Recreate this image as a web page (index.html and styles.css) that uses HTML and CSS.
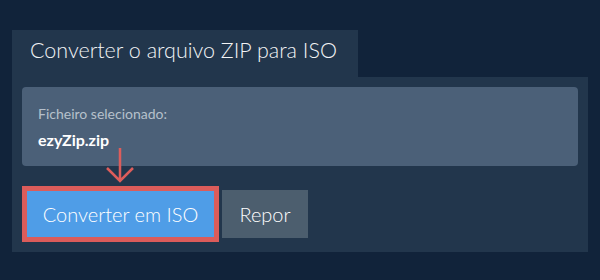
FILE: index.html
```html
<!DOCTYPE html>
<html>
<head>
  <title>Converter ZIP para ISO</title>
  <link rel="stylesheet" href="styles.css">
</head>
<body>
  <div class="conv">
    <div class="tab">Converter o arquivo ZIP para ISO</div>
    <div class="panel">
      <div class="ficheiro">
        <div class="rotulo">Ficheiro selecionado:</div>
        <div class="nome">ezyZip.zip</div>
      </div>
      <svg class="seta" width="30" height="36" viewBox="0 0 30 36">
        <path d="M15 0 V33 M2 20 L15 33 L28 20" fill="none" stroke="#dd5d5b" stroke-width="2.5"/>
      </svg>
      <div class="botoes">
        <button class="btn converter">Converter em ISO</button>
        <button class="btn repor">Repor</button>
      </div>
    </div>
  </div>
</body>
</html>
```

FILE: styles.css
```css
body {
  margin: 0;
  background-color: #11233a;
  font-family: Lato, "Open Sans", sans-serif;
}

.conv {
  width: 576px;
  padding: 30px 0 0 12px;
}

.tab {
  width: 346px;
  height: 47px;
  box-sizing: border-box;
  padding: 7px 0 0 18px;
  background-color: #22364c;
  color: #f2f4f6;
  font-size: 21.5px;
  font-weight: 300;
}

.panel {
  position: relative;
  height: 175px;
  box-sizing: border-box;
  padding: 10px;
  background-color: #22364c;
}

.ficheiro {
  height: 79px;
  box-sizing: border-box;
  padding: 18px 16px 0;
  background-color: #4b6078;
  border-radius: 4px;
}

.rotulo {
  color: #b6c0cb;
  font-size: 14px;
}

.nome {
  margin-top: 8px;
  color: #fff;
  font-size: 16px;
  font-weight: bold;
}

.seta {
  position: absolute;
  left: 93px;
  top: 71px;
}

.botoes {
  display: flex;
  align-items: center;
  gap: 3px;
  margin-top: 20px;
}

.btn {
  font-family: Lato, "Open Sans", sans-serif;
  font-size: 20px;
  font-weight: 300;
  color: #fff;
  cursor: pointer;
}

.converter {
  height: 56px;
  width: 197px;
  padding: 0;
  background-color: #4f9de7;
  border: solid 5px #dc5c5a;
}

.repor {
  height: 48px;
  width: 86px;
  padding: 0;
  background-color: #4c5e6e;
  border: none;
}
```
